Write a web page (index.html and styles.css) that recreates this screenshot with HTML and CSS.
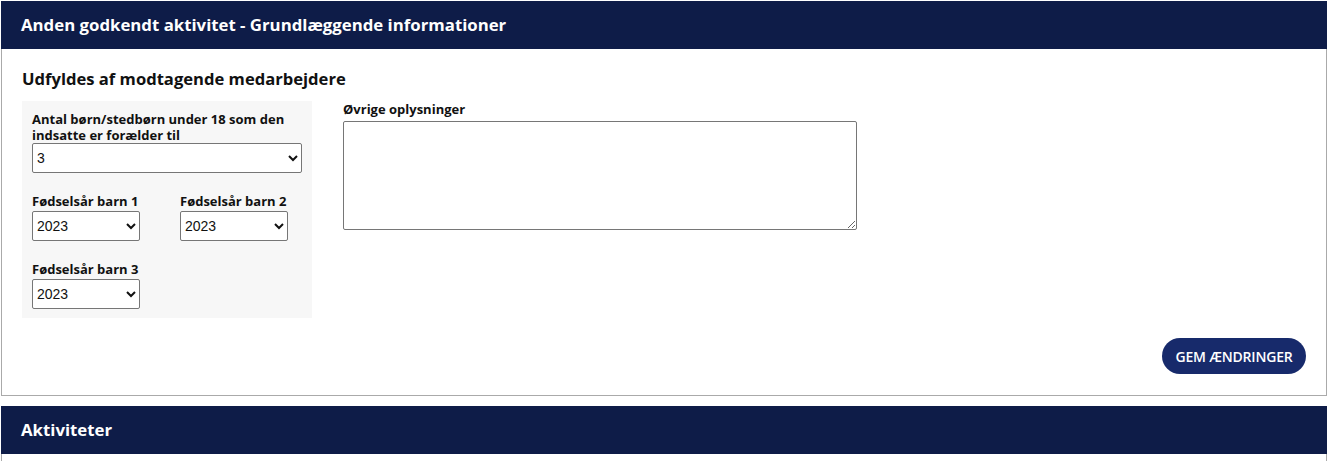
FILE: index.html
```html
<!DOCTYPE html>
<html lang="da">
<head>
<meta charset="utf-8">
<link rel="stylesheet" href="styles.css">
</head>
<body>
<section class="card">
  <div class="card-head">Anden godkendt aktivitet - Grundlæggende informationer</div>
  <div class="card-body">
    <h2 class="sub">Udfyldes af modtagende medarbejdere</h2>
    <div class="cols">
      <div class="graybox">
        <label class="lbl">Antal børn/stedbørn under 18 som den indsatte er forælder til</label>
        <select class="sel sel-wide"><option>3</option></select>
        <div class="years">
          <div class="field">
            <label class="lbl">Fødselsår barn 1</label>
            <select class="sel sel-small"><option>2023</option></select>
          </div>
          <div class="field">
            <label class="lbl">Fødselsår barn 2</label>
            <select class="sel sel-small"><option>2023</option></select>
          </div>
          <div class="field">
            <label class="lbl">Fødselsår barn 3</label>
            <select class="sel sel-small"><option>2023</option></select>
          </div>
        </div>
      </div>
      <div class="notes">
        <label class="lbl">Øvrige oplysninger</label>
        <textarea class="ta"></textarea>
      </div>
    </div>
    <div class="actions">
      <button class="btn">GEM ÆNDRINGER</button>
    </div>
  </div>
</section>
<section class="card card2">
  <div class="card-head">Aktiviteter</div>
  <div class="card-body short"></div>
</section>
</body>
</html>
```
FILE: styles.css
```css
html, body { margin: 0; padding: 0; background: #fff; }
body { padding: 1px 0 0 1px; font-family: "Open Sans", "Noto Sans", sans-serif; color: #111; }
.card { width: 1326px; }
.card2 { margin-top: 10px; }
.card-head {
  background: #0e1c48;
  color: #fff;
  font-weight: 700;
  font-size: 16.8px;
  height: 48px;
  line-height: 48px;
  padding-left: 20px;
  box-sizing: border-box;
}
.card-body {
  border: 1px solid #aaa;
  border-top: none;
  padding: 18px 20px 20px 20px;
  height: 347px;
  box-sizing: border-box;
}
.card-body.short { height: 20px; padding: 0; border-bottom: none; }
.sub { margin: 0 0 10px 0; font-size: 16.6px; font-weight: 700; line-height: 24px; }
.cols { display: flex; gap: 31px; align-items: flex-start; }
.graybox {
  background: #f7f7f7;
  width: 290px;
  box-sizing: border-box;
  padding: 10px 10px 9px 10px;
}
.lbl { display: block; font-size: 13px; font-weight: 700; line-height: 16px; }
.graybox > .lbl { width: 270px; }
.sel {
  display: block;
  height: 30px;
  font-family: Arial, "Liberation Sans", sans-serif;
  font-size: 14px;
  color: #111;
  border: 1px solid #767676;
  border-radius: 2px;
  background: #fff;
  margin-top: 2px;
}
.sel-wide { width: 270px; margin-top: 0; }
.sel-small { width: 108px; }
.years { display: grid; grid-template-columns: 148px 120px; row-gap: 20px; margin-top: 20px; }
.ta {
  display: block;
  width: 514px;
  height: 109px;
  box-sizing: border-box;
  border: 1px solid #767676;
  border-radius: 2px;
  margin-top: 4px;
  resize: both;
}
.actions { display: flex; justify-content: flex-end; margin-top: 20px; }
.btn {
  background: #172a6b;
  color: #fff;
  border: none;
  border-radius: 18px;
  height: 36px;
  width: 144px;
  font-family: "Open Sans", "Noto Sans", sans-serif;
  font-weight: 600;
  font-size: 14px;
  letter-spacing: -0.2px;
  padding: 0;
  cursor: pointer;
}
```
